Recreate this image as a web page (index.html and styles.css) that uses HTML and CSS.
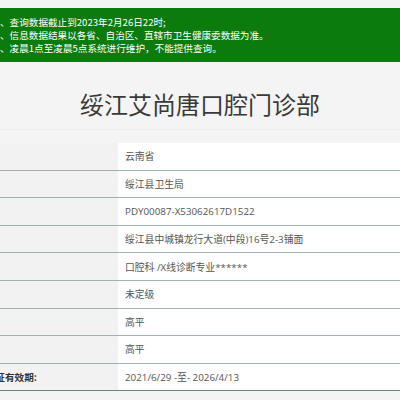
FILE: index.html
```html
<!DOCTYPE html>
<html lang="zh-CN">
<head>
<meta charset="utf-8">
<title>绥江艾尚唐口腔门诊部</title>
<link rel="stylesheet" href="styles.css">
</head>
<body>
<div class="page">
  <div class="notice">
    <p>1、查询数据截止到2023年2月26日22时;</p>
    <p>2、信息数据结果以各省、自治区、直辖市卫生健康委数据为准。</p>
    <p>3、凌晨1点至凌晨5点系统进行维护，不能提供查询。</p>
  </div>
  <h1 class="title">绥江艾尚唐口腔门诊部</h1>
  <div class="info">
    <div class="row"><div class="label">所属省份:</div><div class="value">云南省</div></div>
    <div class="row"><div class="label">主管单位:</div><div class="value">绥江县卫生局</div></div>
    <div class="row"><div class="label">登记号:</div><div class="value">PDY00087-X53062617D1522</div></div>
    <div class="row"><div class="label">地址:</div><div class="value">绥江县中城镇龙行大道(中段)16号2-3铺面</div></div>
    <div class="row"><div class="label">诊疗科目:</div><div class="value">口腔科 /X线诊断专业******</div></div>
    <div class="row"><div class="label">医院等级:</div><div class="value">未定级</div></div>
    <div class="row"><div class="label">法人:</div><div class="value">高平</div></div>
    <div class="row"><div class="label">负责人:</div><div class="value">高平</div></div>
    <div class="row last"><div class="label">执业许可证有效期:</div><div class="value">2021/6/29 -至- 2026/4/13</div></div>
  </div>
</div>
</body>
</html>
```
FILE: styles.css
```css
html, body {
  margin: 0;
  padding: 0;
}
body {
  background: #f4f4f4;
  overflow: hidden;
  font-family: "Noto Sans CJK SC", "Noto Sans", sans-serif;
  width: 400px;
  height: 400px;
}
.page {
  width: 502px;
  margin-left: -51px;
  padding-top: 8px;
}
.notice {
  background: #0b7b0d;
  color: #fff;
  padding: 8px 10px 7.6px 45.7px;
  font-size: 9.6px;
  line-height: 12.8px;
}
.notice p {
  margin: 0;
  white-space: nowrap;
}
.title {
  margin: 0;
  padding: 26px 0 9px;
  text-align: center;
  font-size: 24px;
  line-height: 32px;
  font-weight: normal;
  color: #3a3a3a;
  border-bottom: 1px solid #ececec;
}
.info {
  margin-top: 13px;
}
.row {
  display: flex;
  height: 26.6px;
  border-bottom: 1px solid #9cb4aa;
}
.row.last {
  border-bottom-color: #6a897c;
}
.label {
  width: 161px;
  flex: none;
  padding-left: 8px;
  display: flex;
  align-items: center;
  font-size: 9.6px;
  font-weight: bold;
  color: #333;
  background: #f2f2f2;
  white-space: nowrap;
}
.value {
  flex: 1;
  background: #fff;
  display: flex;
  align-items: center;
  padding-left: 7px;
  font-family: "Open Sans", "Noto Sans CJK SC", sans-serif;
  font-size: 9.8px;
  color: #555;
  white-space: nowrap;
}
```
